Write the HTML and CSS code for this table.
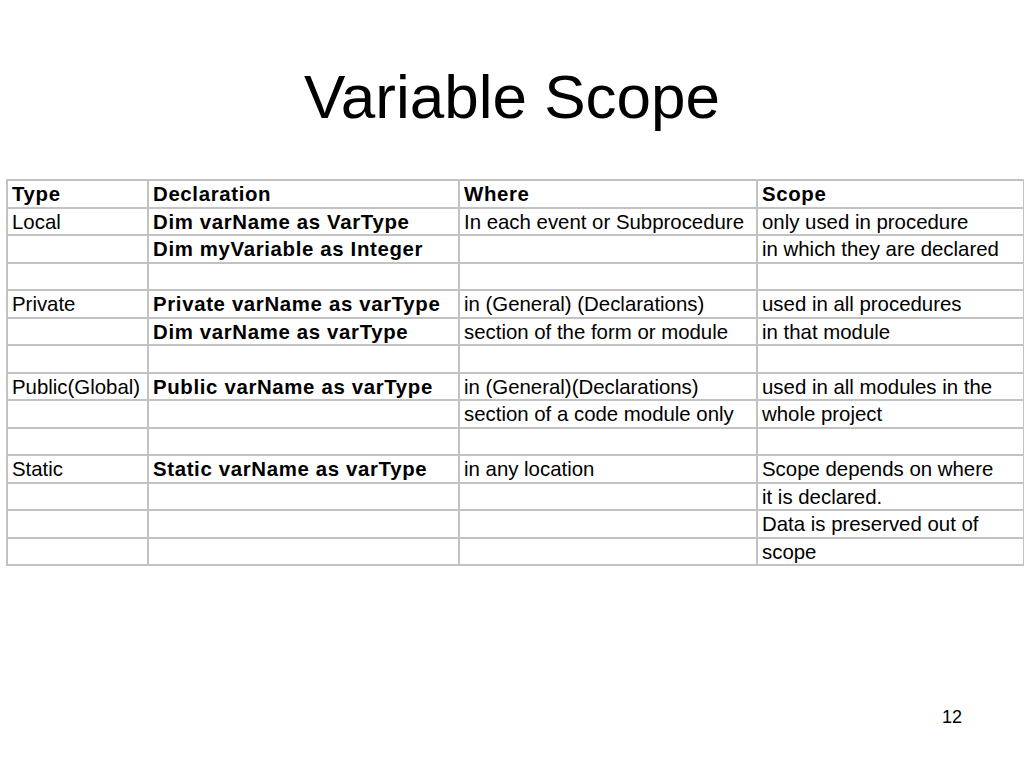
FILE: index.html
```html
<!DOCTYPE html>
<html>
<head>
<meta charset="utf-8">
<link rel="stylesheet" href="styles.css">
</head>
<body>
<div class="slide">
  <h1 class="title">Variable Scope</h1>
  <table class="scope">
    <colgroup>
      <col class="c1"><col class="c2"><col class="c3"><col class="c4">
    </colgroup>
    <tr class="head"><td>Type</td><td>Declaration</td><td>Where</td><td>Scope</td></tr>
    <tr><td>Local</td><td class="b">Dim varName as VarType</td><td>In each event or Subprocedure</td><td>only used in procedure</td></tr>
    <tr><td></td><td class="b">Dim myVariable as Integer</td><td></td><td>in which they are declared</td></tr>
    <tr><td></td><td></td><td></td><td></td></tr>
    <tr><td>Private</td><td class="b">Private varName as varType</td><td>in (General) (Declarations)</td><td>used in all procedures</td></tr>
    <tr><td></td><td class="b">Dim varName as varType</td><td>section of the form or module</td><td>in that module</td></tr>
    <tr><td></td><td></td><td></td><td></td></tr>
    <tr><td>Public(Global)</td><td class="b">Public varName as varType</td><td>in (General)(Declarations)</td><td>used in all modules in the</td></tr>
    <tr><td></td><td></td><td>section of a code module only</td><td>whole project</td></tr>
    <tr><td></td><td></td><td></td><td></td></tr>
    <tr><td>Static</td><td class="b">Static varName as varType</td><td>in any location</td><td>Scope depends on where</td></tr>
    <tr><td></td><td></td><td></td><td>it is declared.</td></tr>
    <tr><td></td><td></td><td></td><td>Data is preserved out of</td></tr>
    <tr><td></td><td></td><td></td><td>scope</td></tr>
  </table>
  <div class="pageno">12</div>
</div>
</body>
</html>
```

FILE: styles.css
```css
html, body {
  margin: 0;
  padding: 0;
  background: #ffffff;
}
.slide {
  width: 1024px;
  height: 768px;
  display: flex;
  flex-direction: column;
  font-family: "Liberation Sans", Arial, sans-serif;
  color: #000;
}
.title {
  margin: 0;
  padding-top: 66px;
  font-size: 62px;
  line-height: 62px;
  font-weight: normal;
  text-align: center;
  height: 62px;
}
.scope {
  margin: 51px 0 0 6px;
  border-collapse: collapse;
  table-layout: fixed;
  width: 1017px;
  font-size: 20.4px;
}
.c1 { width: 141px; }
.c2 { width: 311px; }
.c3 { width: 298px; }
.c4 { width: 267px; }
.scope td {
  border: 2px solid #c2c2c2;
  height: 23.5px;
  padding: 2px 0 0 4px;
  line-height: 23px;
  white-space: nowrap;
  overflow: hidden;
  vertical-align: middle;
}
.scope .head td {
  font-weight: bold;
  letter-spacing: 0.65px;
}
.scope td.b {
  font-weight: bold;
  letter-spacing: 0.65px;
}
.pageno {
  margin-top: auto;
  margin-bottom: 42px;
  padding-right: 62px;
  text-align: right;
  font-size: 18px;
  line-height: 18px;
}
```
